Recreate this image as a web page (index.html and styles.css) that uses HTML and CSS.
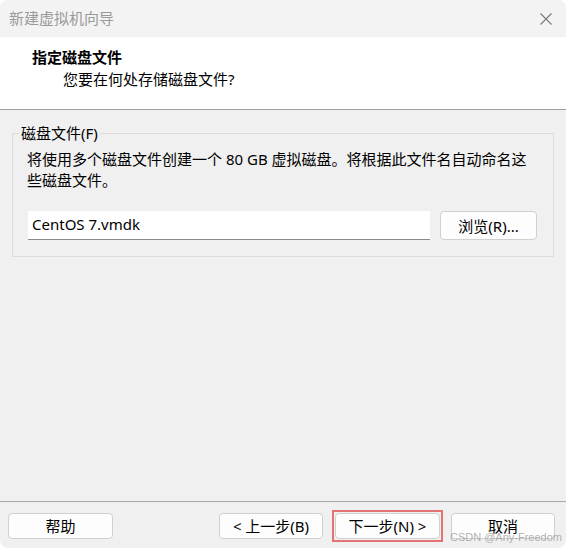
FILE: index.html
```html
<!DOCTYPE html>
<html lang="zh-CN">
<head>
<meta charset="utf-8">
<title>新建虚拟机向导</title>
<link rel="stylesheet" href="styles.css">
</head>
<body>
<div class="window">
  <div class="titlebar">
    <span class="title">新建虚拟机向导</span>
    <svg class="close" width="12" height="12" viewBox="0 0 12 12"><path d="M0.5 0.5 L11.5 11.5 M11.5 0.5 L0.5 11.5" stroke="#7a7a7a" stroke-width="1.1" fill="none"/></svg>
  </div>
  <div class="header">
    <div class="h-title">指定磁盘文件</div>
    <div class="h-sub">您要在何处存储磁盘文件?</div>
  </div>
  <div class="main">
    <fieldset class="group">
      <legend class="legend">磁盘文件(F)</legend>
      <p class="desc">将使用多个磁盘文件创建一个 80 GB 虚拟磁盘。将根据此文件名自动命名这些磁盘文件。</p>
      <div class="file-row">
        <div class="input">CentOS 7.vmdk</div>
        <button class="btn browse">浏览(R)...</button>
      </div>
    </fieldset>
  </div>
  <div class="footer">
    <button class="btn help">帮助</button>
    <div class="spacer"></div>
    <button class="btn back">&lt; 上一步(B)</button>
    <div class="focus-ring"><button class="btn next">下一步(N) &gt;</button></div>
    <button class="btn cancel">取消</button>
  </div>
  <div class="watermark">CSDN @Any-Freedom</div>
</div>
</body>
</html>
```

FILE: styles.css
```css
* { box-sizing: border-box; }
html, body {
  margin: 0;
  padding: 0;
  background: #ffffff;
}
body {
  font-family: "Noto Sans", "Noto Sans CJK SC", sans-serif;
  font-size: 15px;
  line-height: 20px;
  color: #000;
}
.window {
  position: relative;
  width: 566px;
  height: 548px;
  background: #f0f0f0;
  border-radius: 8px;
  overflow: hidden;
  display: flex;
  flex-direction: column;
}
.titlebar {
  height: 36px;
  background: #f3f3f3;
  display: flex;
  align-items: center;
  justify-content: space-between;
  padding: 0 14px 0 9px;
}
.title {
  color: #9a9a9a;
  font-size: 15px;
}
.close { display: block; margin-top: 1px; }
.header {
  height: 74px;
  background: #ffffff;
  border-top: 1px solid #f0f0f0;
  border-bottom: 1px solid #a0a0a0;
  padding: 10px 0 0 32px;
}
.h-title {
  font-weight: bold;
  font-size: 15px;
  line-height: 20px;
}
.h-sub {
  padding-left: 31px;
  margin-top: 2px;
}
.main {
  flex: 1;
  padding: 13px 12px 0 12px;
}
.group {
  margin: 0;
  border: 1px solid #dcdcdc;
  padding: 6px 16px 16px 14px;
  min-width: 0;
}
.legend {
  padding: 0 2px;
  margin-left: -8px;
  line-height: 20px;
}
.desc {
  margin: 0;
  line-height: 21px;
}
.file-row {
  display: flex;
  align-items: flex-start;
  gap: 10px;
  margin-top: 20px;
  padding-left: 1px;
}
.input {
  flex: 1;
  height: 29px;
  background: #ffffff;
  border-bottom: 1px solid #8a8a8a;
  padding: 3px 4px;
  line-height: 20px;
}
.btn {
  font-family: inherit;
  font-size: 15px;
  line-height: 20px;
  color: #000;
  background: #fdfdfd;
  border: 1px solid #d0d0d0;
  border-radius: 4px;
  padding: 0;
  height: 26px;
}
.browse {
  width: 97px;
  height: 29px;
}
.footer {
  height: 47px;
  border-top: 1px solid #a8a8a8;
  display: flex;
  align-items: flex-start;
  padding: 11px 11px 0 8px;
}
.spacer { flex: 1; }
.help { width: 105px; }
.back { width: 104px; }
.focus-ring {
  margin: -3px 0 0 9px;
  border: 2px solid #e57373;
  padding: 1px;
  display: flex;
}
.next { width: 105px; }
.cancel {
  width: 104px;
  margin-left: 8px;
}
.watermark {
  position: absolute;
  right: 4px;
  bottom: 4px;
  font-family: "Liberation Sans", sans-serif;
  font-size: 11px;
  line-height: 13px;
  color: rgba(150, 150, 150, 0.75);
}
```
